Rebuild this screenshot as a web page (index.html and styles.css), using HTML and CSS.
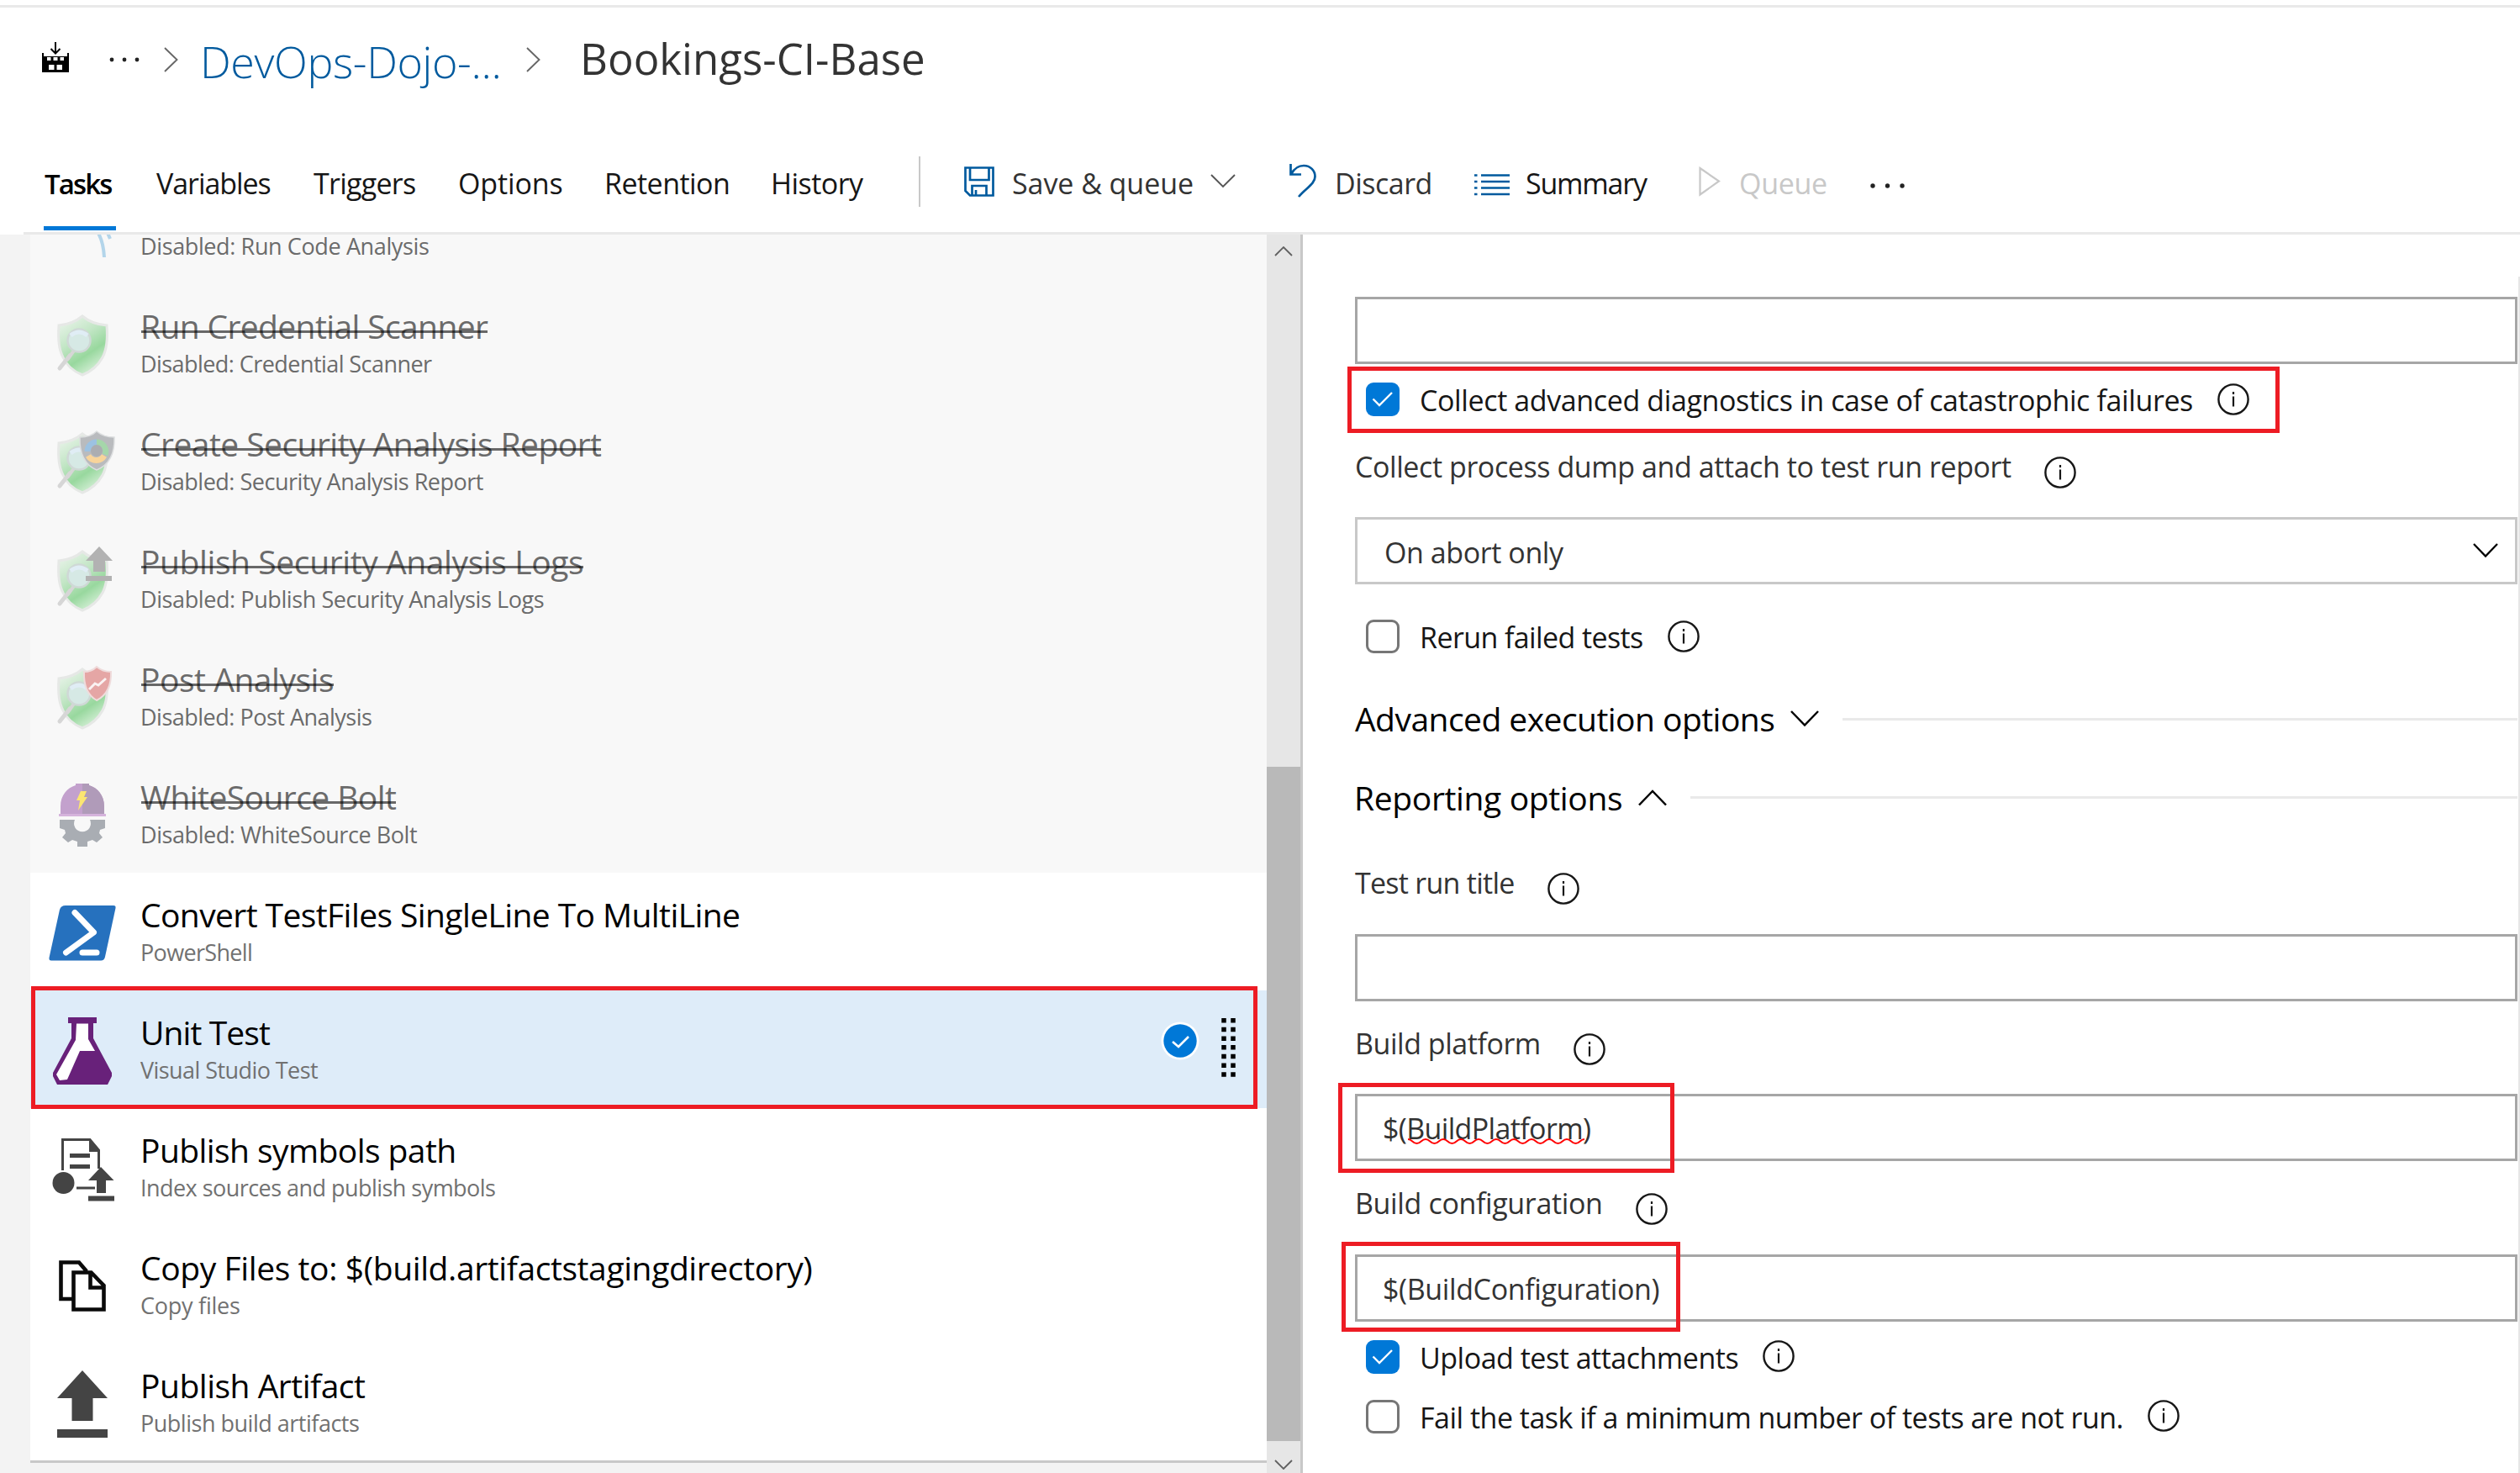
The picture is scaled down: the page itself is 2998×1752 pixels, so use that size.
FILE: index.html
```html
<!DOCTYPE html>
<html lang="en">
<head>
<meta charset="utf-8">
<title>Bookings-CI-Base</title>
<link rel="stylesheet" href="styles.css">
</head>
<body>
<svg class="defs" width="0" height="0">
  <defs>
    <linearGradient id="shieldFill" x1="0" y1="0" x2=".55" y2="1">
      <stop offset="0" stop-color="#f1f6f1"/><stop offset=".45" stop-color="#c3e6c6"/><stop offset=".75" stop-color="#98d89e"/><stop offset="1" stop-color="#cfedd1"/>
    </linearGradient>
    <symbol id="shield" viewBox="0 0 80 80">
      <path d="M40 6C47 12 57 16 69 17C70 30 70 44 64 55C58 66 50 72 40 76C30 72 22 66 17 55C11 44 11 30 12 17C23 16 33 12 40 6Z" fill="url(#shieldFill)" stroke="#e6e8e6" stroke-width="3"/>
      <path d="M13 68L25 53" stroke="#d6d6d6" stroke-width="5" stroke-linecap="round"/>
      <path d="M22 58L30 47" stroke="#d6d6d6" stroke-width="4"/>
      <circle cx="36" cy="35" r="13.5" fill="#d6e9e5" stroke="#cfd8d6" stroke-width="2.5"/>
      <path d="M26 29Q36 21 46 29" fill="none" stroke="#e0edf5" stroke-width="5"/>
    </symbol>
    <symbol id="info" viewBox="0 0 38 38">
      <circle cx="19" cy="19" r="17.6" fill="none" stroke="#161616" stroke-width="2.4"/>
      <path d="M19 15.5V27.5M19 10V13" stroke="#161616" stroke-width="2.2"/>
    </symbol>
    <symbol id="tick" viewBox="0 0 40 40"><path d="M8.500 19.500L16 27L31 12" fill="none" stroke="#fff" stroke-width="2.400"/></symbol>
  </defs>
</svg>
<header class="header">
  <nav class="crumbs">
    <svg width="32" height="36" viewBox="0 0 32 36"><path d="M16 0V13M10.500 8L16 13.500L21.500 8" fill="none" stroke="#000" stroke-width="2"/><path fill="#000" fill-rule="evenodd" d="M0 13H2V17H30V13H32V36H0ZM6 18V22H10.500V18ZM13.500 18V22H18.500V18ZM21.500 18V22H26V18ZM8 27V33H14.500V27ZM17.500 27V33H24V27Z"/></svg>
    <svg width="38" height="6" viewBox="0 0 38 6"><g fill="#222"><circle cx="3" cy="3" r="2.400"/><circle cx="18" cy="3" r="2.400"/><circle cx="33" cy="3" r="2.400"/></g></svg>
    <svg width="17" height="30" viewBox="0 0 17 30"><path d="M1 1L15.500 15L1 29" fill="none" stroke="#666" stroke-width="1.900"/></svg>
    <a class="crumb-link">DevOps-Dojo-...</a>
    <svg width="17" height="30" viewBox="0 0 17 30"><path d="M1 1L15.500 15L1 29" fill="none" stroke="#666" stroke-width="1.900"/></svg>
    <h1 class="crumb-title">Bookings-CI-Base</h1>
  </nav>
  <div class="toolbar">
    <a class="tab active">Tasks</a>
    <a class="tab k106">Variables</a>
    <a class="tab k73">Triggers</a>
    <a class="tab k13">Options</a>
    <a class="tab k54">Retention</a>
    <a class="tab k54">History</a>
    <i class="divider"></i>
    <svg class="save" width="36" height="36" viewBox="0 0 36 36"><path d="M1.500 1.500H34.500V34.500H7L1.500 29Z M7 1.500V16H29.500V1.500 M9.500 34V23H26.500V34 M14 34V28" fill="none" stroke="#005a9e" stroke-width="2.700"/></svg>
    <span class="k06 dark">Save &amp; queue</span>
    <svg class="more" width="30" height="17" viewBox="0 0 30 17"><path d="M1 1L15 15L29 1" fill="none" stroke="#555" stroke-width="1.900"/></svg>
    <svg class="undo" width="32" height="40" viewBox="0 0 32 40"><path d="M1.500 0V12.500H14M2 12C6 5 11 2 17 2C25 2 30.500 8 30.500 15C30.500 24 19 29 11 39" fill="none" stroke="#005a9e" stroke-width="2.700"/></svg>
    <span class="k50 dark">Discard</span>
    <svg class="lines" width="42" height="28" viewBox="0 0 42 28"><path d="M0 2.500H3.500M0 10H3.500M0 17.500H3.500M0 25H3.500M8 2.500H42M8 10H42M8 17.500H42M8 25H42" stroke="#005a9e" stroke-width="2.600"/></svg>
    <span class="k121">Summary</span>
    <svg class="play" width="26" height="36" viewBox="0 0 26 36"><path d="M1.500 2L24 17.500L1.500 33.500Z" fill="none" stroke="#c8c8c8" stroke-width="2.200"/></svg>
    <span class="k30 off">Queue</span>
    <svg class="dots" width="42" height="6" viewBox="0 0 42 6"><g fill="#222"><circle cx="3" cy="3" r="2.700"/><circle cx="20.500" cy="3" r="2.700"/><circle cx="38" cy="3" r="2.700"/></g></svg>
  </div>
</header>
<main class="main">
  <section class="tasks">
    <div class="list">
      <article class="task disabled">
        <svg class="icon" viewBox="0 0 80 80"><path d="M57 44Q65 56 66 76M70 47L73 54" fill="none" stroke="#b3d5ea" stroke-width="4"/></svg>
        <div class="text"><h2></h2><p class="k38">Disabled: Run Code Analysis</p></div>
      </article>
      <article class="task disabled">
        <svg class="icon" viewBox="0 0 80 80"><use href="#shield"/></svg>
        <div class="text"><h2><span class="k62">Run Credential Scanner</span></h2><p class="k56">Disabled: Credential Scanner</p></div>
      </article>
      <article class="task disabled">
        <svg class="icon" viewBox="0 0 80 80"><use href="#shield"/><path d="M57 3Q65 10 78 10Q79 40 57 49Q36 40 37 10Q50 10 57 3Z" fill="#b9bbbe" stroke="#dcdedf" stroke-width="1.500"/><g fill="none" stroke-width="7"><path d="M46 27A11 11 0 0 1 57 16" stroke="#9cc2e2"/><path d="M57 16A11 11 0 0 1 67 31" stroke="#a5d6aa"/><path d="M66 32A11 11 0 0 1 47 32" stroke="#f8d49a"/></g><circle cx="57" cy="26" r="7" fill="#abadb1"/></svg>
        <div class="text"><h2><span class="k54">Create Security Analysis Report</span></h2><p class="k49">Disabled: Security Analysis Report</p></div>
      </article>
      <article class="task disabled">
        <svg class="icon" viewBox="0 0 80 80"><use href="#shield"/><path d="M60 0L76 17H67V30H53V17H44ZM44 35H75V41H44Z" fill="#b2b2b2"/></svg>
        <div class="text"><h2><span class="k40">Publish Security Analysis Logs</span></h2><p class="k41">Disabled: Publish Security Analysis Logs</p></div>
      </article>
      <article class="task disabled">
        <svg class="icon" viewBox="0 0 80 80"><use href="#shield"/><path d="M57 3Q64 9 74 9Q75 34 57 43Q41 34 42 9Q51 9 57 3Z" fill="#e5a6a5" stroke="#efdcdc" stroke-width="2"/><path d="M48 30L55 23L59 25L68 17" fill="none" stroke="#faf2f2" stroke-width="3"/></svg>
        <div class="text"><h2><span class="k47">Post Analysis</span></h2><p class="k50">Disabled: Post Analysis</p></div>
      </article>
      <article class="task disabled">
        <svg class="icon" viewBox="0 0 80 80"><path d="M14 39V29C14 16 22 7 32 4V2H48V4C58 7 66 16 66 29V39Z" fill="#c3a1cd"/><path d="M40 2H48V4C58 7 66 16 66 29V39H40Z" fill="#b09bb9"/><path d="M12 38H68V41H12Z" fill="#d5b3dc"/><path d="M38 11H45L42 18H46L35 34L37 22H33Z" fill="#fbe572"/><path d="M13 45H31A10 10 0 1 0 49 45H67V55L61 57L60 61L64 66L57 72L52 69L46 71V77H34V71L28 69L23 72L16 66L20 61L19 57L13 55Z" fill="#a9adb3"/></svg>
        <div class="text"><h2><span class="k57">WhiteSource Bolt</span></h2><p class="k43">Disabled: WhiteSource Bolt</p></div>
      </article>
      <article class="task">
        <svg class="icon" viewBox="0 0 80 80"><path d="M20 7H77Q80 7 79.500 10L67 68Q66 72.500 62 72.500H3Q0 72.500 .5 69L13 12Q14.500 7 20 7Z" fill="#2671be"/><path d="M31 15.500L53.500 39L20.500 63" fill="none" stroke="#fff" stroke-width="7" stroke-linecap="round" stroke-linejoin="round"/><path d="M40 63H57" stroke="#fff" stroke-width="7" stroke-linecap="round"/></svg>
        <div class="text"><h2><span class="k59">Convert TestFiles SingleLine To MultiLine</span></h2><p class="k66">PowerShell</p></div>
      </article>
      <article class="task selected">
        <svg class="icon" viewBox="0 0 80 80"><path d="M23 0H57V7H53V25L75 66V70L70 80H10L5 70V66L27 25V7H23Z" fill="#68217a"/><path d="M33 7.500H47V26L55 40H37L22 74L13 75L9 68L32 27Z" fill="#fff"/></svg>
        <div class="text"><h2><span class="k90">Unit Test</span></h2><p class="k57">Visual Studio Test</p></div>
        <svg class="done" width="46" height="46" viewBox="0 0 46 46"><circle cx="23" cy="23" r="22.500" fill="#fff"/><circle cx="23" cy="23" r="19.700" fill="#0078d7"/><path d="M14 24L21 30L33 18" fill="none" stroke="#fff" stroke-width="2.600"/></svg>
        <svg class="grip" width="17" height="70" viewBox="0 0 17 70"><path d="M3 0V70M14 0V70" stroke="#000" stroke-width="5.500" stroke-dasharray="5.500 5.200"/></svg>
        <i class="mark mark-task"></i>
      </article>
      <article class="task">
        <svg class="icon" viewBox="0 0 80 80"><path d="M16.500 42V5.500H49L59.500 18V40M33 63H55" fill="none" stroke="#444" stroke-width="3"/><path d="M48 5L61 20H48ZM25 22H49V27H25ZM25 35H49V40H25Z" fill="#444"/><circle cx="17.500" cy="57" r="13" fill="#444"/><path d="M62 38L77.500 54H68V69H57V54H47ZM47 72.500H78V78.500H47Z" fill="#444"/></svg>
        <div class="text"><h2><span class="k57">Publish symbols path</span></h2><p class="k54">Index sources and publish symbols</p></div>
      </article>
      <article class="task">
        <svg class="icon" viewBox="0 0 80 80"><path d="M28 55H14.500V11.500H36L45 22M29.500 23.500H50.500L65.500 39V67.500H29.500ZM49.500 24V41.500H65" fill="none" stroke="#0a0a0a" stroke-width="4.600"/></svg>
        <div class="text"><h2><span class="k40">Copy Files to: $(build.artifactstagingdirectory)</span></h2><p class="k24">Copy files</p></div>
      </article>
      <article class="task">
        <svg class="icon" viewBox="0 0 80 80"><path d="M40 0L70 33H52.500V60H27.500V33H10ZM10 70H70V80H10Z" fill="#444"/></svg>
        <div class="text"><h2><span class="k49">Publish Artifact</span></h2><p class="k49">Publish build artifacts</p></div>
      </article>
    </div>
    <div class="scrollbar">
      <svg width="22" height="12" viewBox="0 0 22 12"><path d="M1 11L11 1L21 11" fill="none" stroke="#606060" stroke-width="1.800"/></svg>
      <div class="thumb"></div>
      <svg width="22" height="12" viewBox="0 0 22 12"><path d="M1 1L11 11L21 1" fill="none" stroke="#606060" stroke-width="1.800"/></svg>
    </div>
  </section>
  <section class="form">
    <div class="field"></div>
    <div class="check">
      <span class="box on"><svg viewBox="0 0 40 40"><use href="#tick"/></svg></span>
      <span class="k38 cap">Collect advanced diagnostics in case of catastrophic failures</span>
      <svg class="info"><use href="#info"/></svg>
      <i class="mark mark-diag"></i>
    </div>
    <div class="label l-dump"><span class="k42">Collect process dump and attach to test run report</span><svg class="info"><use href="#info"/></svg></div>
    <div class="field select"><span class="k42">On abort only</span><svg width="30" height="18" viewBox="0 0 30 18"><path d="M1 1L15 15.500L29 1" fill="none" stroke="#000" stroke-width="2.300"/></svg></div>
    <div class="check c-rerun"><span class="box"></span><span class="k60 cap">Rerun failed tests</span><svg class="info"><use href="#info"/></svg></div>
    <div class="group g-adv"><h3 class="k54">Advanced execution options</h3><svg width="34" height="20" viewBox="0 0 34 20"><path d="M1 1L17 17.500L33 1" fill="none" stroke="#000" stroke-width="2.500"/></svg><hr></div>
    <div class="group g-rep"><h3 class="k35">Reporting options</h3><svg width="34" height="20" viewBox="0 0 34 20"><path d="M1 18.500L17 2L33 18.500" fill="none" stroke="#000" stroke-width="2.500"/></svg><hr></div>
    <div class="label l-title"><span class="k73">Test run title</span><svg class="info"><use href="#info"/></svg></div>
    <div class="field"></div>
    <div class="label l-plat"><span class="k46">Build platform</span><svg class="info"><use href="#info"/></svg></div>
    <div class="field value"><span class="k64">$(<span class="misspelt">BuildPlatform<svg width="210" height="7" viewBox="0 0 210 7"><path d="M0 1Q2.600 1 5.250 3.500T10.500 6T15.750 3.500T21 1T26.250 3.500T31.500 6T36.750 3.500T42 1T47.250 3.500T52.500 6T57.750 3.500T63 1T68.250 3.500T73.500 6T78.750 3.500T84 1T89.250 3.500T94.500 6T99.750 3.500T105 1T110.250 3.500T115.500 6T120.750 3.500T126 1T131.250 3.500T136.500 6T141.750 3.500T147 1T152.250 3.500T157.500 6T162.750 3.500T168 1T173.250 3.500T178.500 6T183.750 3.500T189 1T194.250 3.500T199.500 6T204.750 3.500T210 1" fill="none" stroke="#f00" stroke-width="2"/></svg></span>)</span><i class="mark mark-plat"></i></div>
    <div class="label l-conf"><span class="k36">Build configuration</span><svg class="info"><use href="#info"/></svg></div>
    <div class="field value"><span class="k38">$(BuildConfiguration)</span><i class="mark mark-conf"></i></div>
    <div class="check c-upload"><span class="box on"><svg viewBox="0 0 40 40"><use href="#tick"/></svg></span><span class="k49 cap">Upload test attachments</span><svg class="info"><use href="#info"/></svg></div>
    <div class="check c-fail"><span class="box"></span><span class="k50 cap">Fail the task if a minimum number of tests are not run.</span><svg class="info"><use href="#info"/></svg></div>
  </section>
  <div class="edge"></div>
</main>
</body>
</html>
```
FILE: styles.css
```css
* { box-sizing: border-box; margin: 0; padding: 0; }
body {
  width: 2998px;
  height: 1752px;
  overflow: hidden;
  display: flex;
  flex-direction: column;
  background: #fff;
  font: 400 34px/42px "Open Sans", "Noto Sans", sans-serif;
  color: #161616;
  white-space: nowrap;
}
svg { display: block; }
.defs { position: absolute; }

/* header */
.header {
  height: 279px;
  padding-top: 6px;
  display: flex;
  flex-direction: column;
  background: linear-gradient(#e9e9e9, #e9e9e9) 0 6px / 100% 3px no-repeat,
              linear-gradient(#e9e9e9, #e9e9e9) 28px 276px / 2970px 3px no-repeat;
}
.crumbs {
  height: 130px;
  padding-left: 50px;
  display: grid;
  grid-template-columns: 80px 65px 43px 388px 64px auto;
  align-items: center;
}
.crumbs > svg:first-child { margin-bottom: 6px; }
.crumb-link {
  font-size: 52px;
  line-height: 70px;
  font-weight: 300;
  letter-spacing: -.38px;
  color: #005a9e;
  padding-top: 4px;
}
.crumb-title {
  font-size: 51px;
  line-height: 70px;
  font-weight: 400;
  color: #333;
  padding-bottom: 5px;
}
.toolbar {
  height: 140px;
  padding: 10px 0 0 53px;
  display: grid;
  grid-template-columns: 133px 187px 172px 174px 198px 176px 54px 57px 236px 94px 54px 166px 61px 206px 48px 156px auto;
  grid-template-rows: 130px;
  align-items: center;
}
.toolbar > * { margin-top: 14px; }
.toolbar .tab.active {
  align-self: stretch;
  width: 86px;
  margin: 0 0 2px -1px;
  padding: 52px 0 0 1px;
  border-bottom: 5px solid #0078d7;
  font-size: 33px;
  font-weight: 600;
  letter-spacing: -1.9px;
  color: #000;
}
.toolbar .divider { width: 2px; height: 60px; margin: 9px 0 0; background: #c8c8c8; }
.toolbar .save { margin-top: 10px; }
.toolbar .more { margin-top: 8px; }
.toolbar .undo { margin-top: 8px; }
.toolbar .lines { margin-top: 18px; }
.toolbar .play { margin-top: 10px; }
.toolbar .dots { margin-top: 20px; }
.dark { color: #333; }
.off { color: #c8c8c8; }

/* task list */
.main { flex: 1; min-height: 0; display: flex; background: #fff; }
.tasks {
  width: 1550px;
  height: 1473px;
  padding-left: 36px;
  display: flex;
  background: #f3f3f3;
  border-right: 3px solid #c8c8c8;
  overflow: hidden;
}
.list {
  flex: 1;
  display: flex;
  flex-direction: column;
  justify-content: flex-start;
  overflow: hidden;
}
.task {
  position: relative;
  flex: none;
  height: 140px;
  padding-left: 22px;
  display: flex;
  background: #fff;
}
.task:first-child { margin-top: -81px; }
.task:last-child { height: 142px; border-bottom: 3px solid #c8c8c8; }
.icon { width: 80px; height: 80px; margin: 32px 29px 0 0; }
.text { flex: 1; padding-top: 23px; }
.text h2 { height: 54px; font-size: 39px; line-height: 54px; font-weight: 400; color: #000; }
.text p { font-size: 27px; line-height: 36px; color: #717171; }
.disabled { background: #f8f8f8; }
.disabled h2, .disabled p { color: #6b6b6b; }
.disabled h2 span { position: relative; display: inline-block; }
.disabled h2 span::after {
  content: "";
  position: absolute;
  left: 1px;
  right: 0;
  top: 32px;
  height: 3px;
  background: rgba(0, 0, 0, .58);
}
.selected { background: #deecf9; }
.done { margin: 37px 26px 0 0; }
.grip { margin: 33px 37px 0 0; }

.scrollbar {
  width: 40px;
  padding: 14px 0 4px;
  display: flex;
  flex-direction: column;
  justify-content: space-between;
  align-items: center;
  background: #e6e6e6;
}
.thumb { width: 40px; height: 802px; margin-top: 584px; background: #b9b9b9; }

/* settings form */
.form { width: 1446px; padding: 74px 1px 0 62px; }
.edge { width: 2px; margin-top: 50px; background: #e6e6e6; }
.field {
  position: relative;
  height: 80px;
  padding: 3px 20px 0 31px;
  display: flex;
  align-items: center;
  justify-content: space-between;
  border: 3px solid #a6a6a6;
  color: #333;
}
.value { padding: 2px 20px 0 30px; }
.select { border-color: #c8c8c8; padding-left: 32px; }
.select svg { margin-bottom: 3px; }
.info { flex: none; width: 38px; height: 38px; }
.check {
  position: relative;
  height: 84px;
  padding-left: 13px;
  display: flex;
  align-items: center;
}
.cap { margin-right: 29px; margin-top: 1px; }
.box { width: 40px; height: 40px; margin-right: 24px; border: 3px solid #767676; border-radius: 9px; }
.box.on { border: 0; background: #0078d7; }
.c-rerun { height: 124px; }
.c-upload .info, .c-fail .info { margin-bottom: 3px; }
.c-fail { height: 58px; }
.label { display: flex; color: #333; }
.label .info { margin: 9px 0 0 39px; }
.l-dump { height: 98px; padding-top: 17px; }
.l-title { height: 105px; padding-top: 23px; }
.l-plat { height: 110px; padding-top: 29px; }
.l-conf { height: 111px; padding-top: 29px; }
.group { display: flex; align-items: center; }
.group h3 { font-size: 39px; line-height: 54px; font-weight: 400; color: #000; }
.group svg { margin: 0 28px 0 19px; }
.group hr { flex: 1; height: 3px; border: 0; background: #e9e9e9; }
.g-adv { height: 72px; }
.g-rep { height: 115px; }
.g-rep h3 { margin-left: -1px; }
.misspelt { position: relative; display: inline-block; }
.misspelt svg { position: absolute; left: 2px; top: 33px; }

/* red highlight frames */
.mark { position: absolute; border: 5px solid #ed1c24; }
.mark-task { left: 1px; top: -5px; width: 1459px; height: 146px; z-index: 1; }
.mark-diag { left: -9px; top: 3px; width: 1109px; height: 79px; }
.mark-plat { left: -23px; top: -16px; width: 400px; height: 107px; }
.mark-conf { left: -19px; top: -18px; width: 403px; height: 107px; }

/* tracking */
.k06 { letter-spacing: -.06px; }
.k13 { letter-spacing: -.13px; }
.k24 { letter-spacing: -.24px; }
.k30 { letter-spacing: -.3px; }
.k35 { letter-spacing: -.35px; }
.k36 { letter-spacing: -.36px; }
.k38 { letter-spacing: -.38px; }
.k40 { letter-spacing: -.4px; }
.k41 { letter-spacing: -.41px; }
.k42 { letter-spacing: -.42px; }
.k43 { letter-spacing: -.43px; }
.k46 { letter-spacing: -.46px; }
.k47 { letter-spacing: -.47px; }
.k49 { letter-spacing: -.49px; }
.k50 { letter-spacing: -.5px; }
.k54 { letter-spacing: -.54px; }
.k56 { letter-spacing: -.56px; }
.k57 { letter-spacing: -.57px; }
.k59 { letter-spacing: -.59px; }
.k60 { letter-spacing: -.6px; }
.k62 { letter-spacing: -.62px; }
.k64 { letter-spacing: -.64px; }
.k66 { letter-spacing: -.66px; }
.k73 { letter-spacing: -.73px; }
.k90 { letter-spacing: -.9px; }
.k106 { letter-spacing: -1.06px; }
.k121 { letter-spacing: -1.21px; }
```
